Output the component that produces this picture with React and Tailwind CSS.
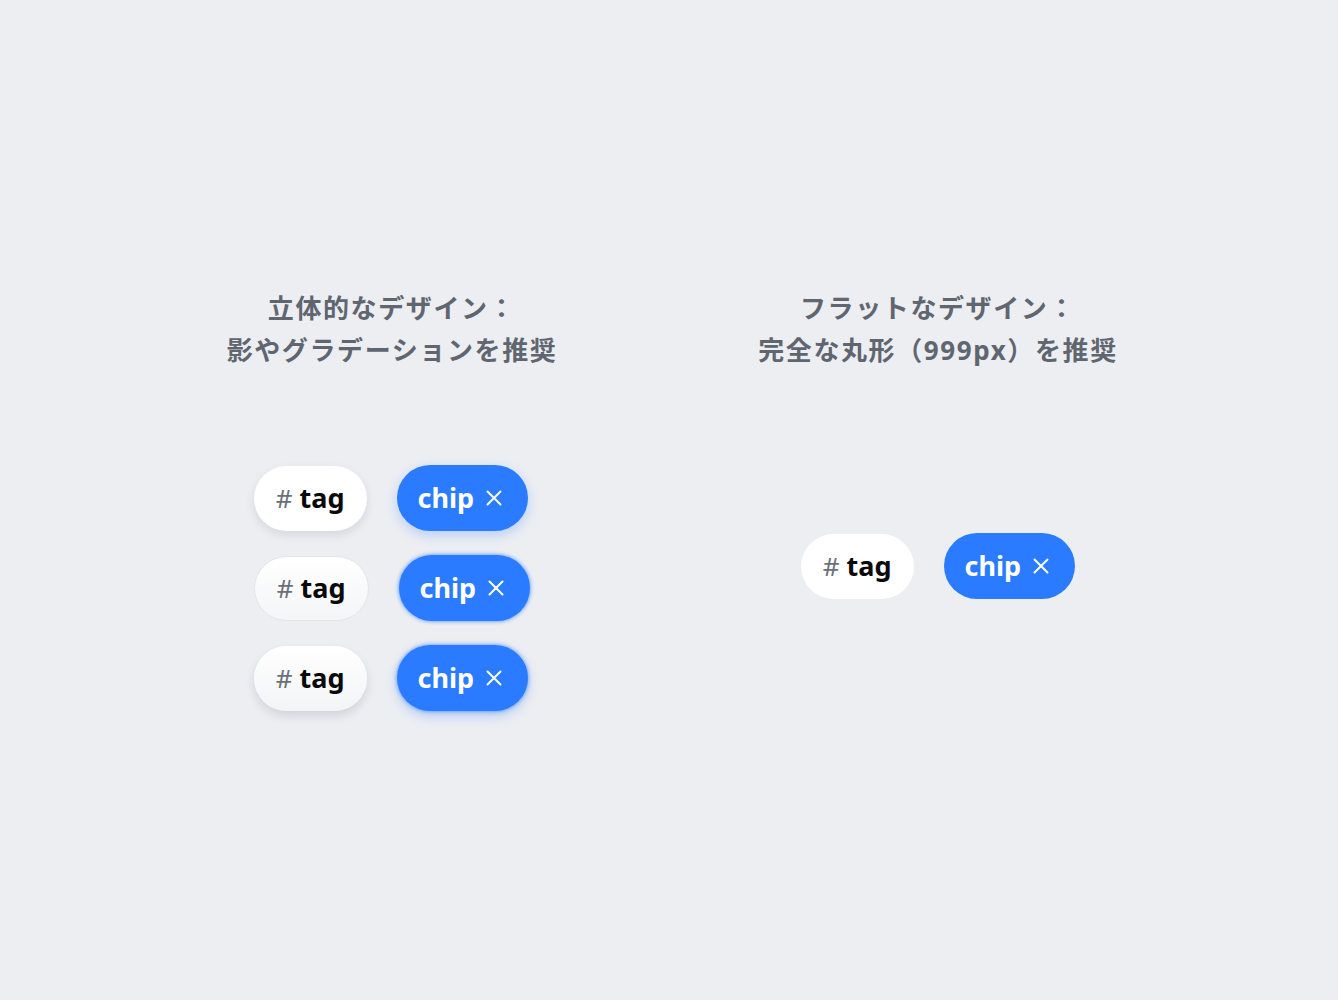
import React from 'react';

const FONT = "font-['Noto_Sans','Noto_Sans_CJK_JP',sans-serif]";

const Tag = ({ variant = 'flat' }) => {
  const styles = {
    flat: 'bg-white',
    shadow: 'bg-white shadow-[0_4px_10px_rgba(15,23,42,0.10)]',
    gradient: 'bg-gradient-to-b from-white to-[#f4f5f7] border border-[#e3e5e9]',
    both: 'bg-gradient-to-b from-white to-[#f3f4f6] shadow-[0_5px_10px_rgba(15,23,42,0.12)]',
  };
  return (
    <span className={`inline-flex items-center h-[65px] px-[22px] rounded-full ${styles[variant]}`}>
      <span className="text-[26px] text-[#6b7078] font-normal mr-[7px]">#</span>
      <span className="text-[27px] font-bold text-[#0a0a0a]">tag</span>
    </span>
  );
};

const Chip = ({ variant = 'flat' }) => {
  const styles = {
    flat: 'bg-[#2a7bff]',
    shadow: 'bg-[#2a7bff] shadow-[0_4px_12px_rgba(42,123,255,0.28)]',
    gradient: 'bg-[#2a7bff] shadow-[0_0_4px_rgba(42,123,255,0.9)]',
    both: 'bg-[#2a7bff] shadow-[0_0_4px_rgba(42,123,255,0.8),0_5px_12px_rgba(42,123,255,0.28)]',
  };
  return (
    <span className={`inline-flex items-center h-[66px] pl-[21px] pr-[25px] rounded-full text-white ${styles[variant]}`}>
      <span className="text-[27px] font-bold">chip</span>
      <svg width="18" height="18" viewBox="0 0 18 18" className="ml-[11px]" fill="none" stroke="currentColor" strokeWidth="2" strokeLinecap="round">
        <path d="M2.5 2.5l13 13M15.5 2.5l-13 13" />
      </svg>
    </span>
  );
};

const Heading = ({ children }) => (
  <h2 className="text-[26px] leading-[42px] font-bold text-[#5f6670] text-center tracking-[1.6px]">{children}</h2>
);

export default function App() {
  return (
    <div className={`min-h-screen w-full bg-[#eceef2] ${FONT}`}>
      <div className="flex justify-center gap-[66px] pr-[8px] pt-[287px]">
        <div className="w-[480px] flex flex-col items-center">
          <Heading>
            立体的なデザイン：
            <br />
            影やグラデーションを推奨
          </Heading>
          <div className="mt-[94px] flex flex-col gap-[24px]">
            {['shadow', 'gradient', 'both'].map(v => (
              <div key={v} className="flex items-center gap-[30px]">
                <Tag variant={v} />
                <Chip variant={v} />
              </div>
            ))}
          </div>
        </div>
        <div className="w-[480px] flex flex-col items-center">
          <Heading>
            フラットなデザイン：
            <br />
            完全な丸形（999px）を推奨
          </Heading>
          <div className="mt-[162px] flex items-center gap-[30px]">
            <Tag variant="flat" />
            <Chip variant="flat" />
          </div>
        </div>
      </div>
    </div>
  );
}
